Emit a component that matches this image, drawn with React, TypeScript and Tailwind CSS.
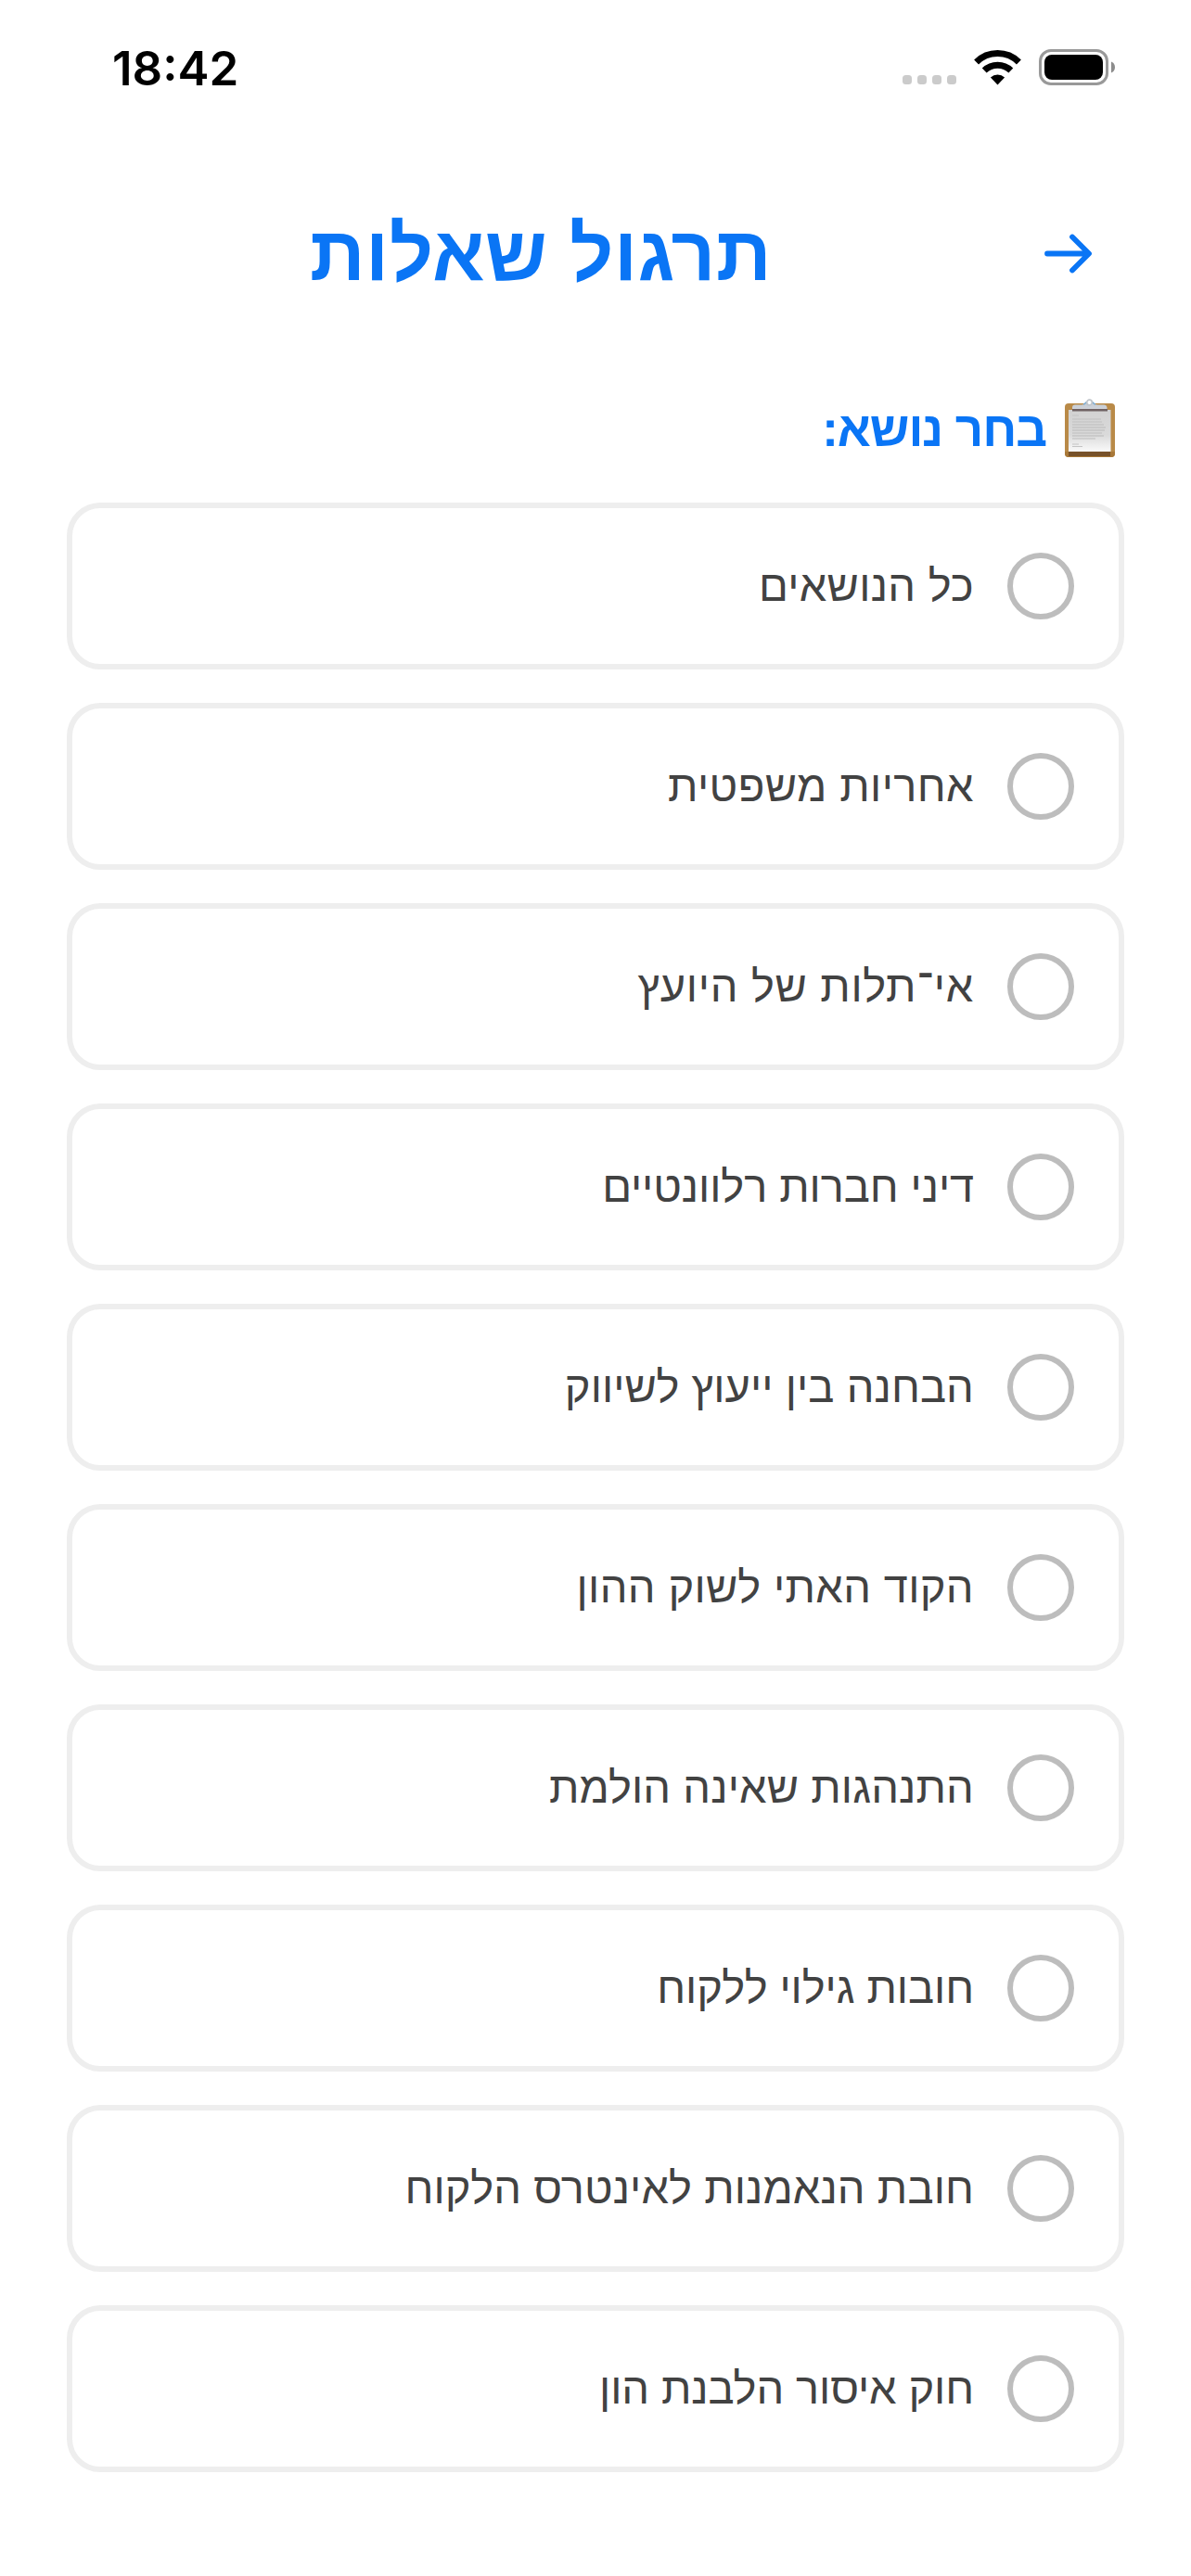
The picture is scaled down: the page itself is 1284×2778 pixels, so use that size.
const topics = [
  { label: 'כל הנושאים', tracking: 'tracking-[0.3px]' },
  { label: 'אחריות משפטית', tracking: 'tracking-[0.4px]' },
  { label: 'אי־תלות של היועץ', tracking: 'tracking-[0.7px]' },
  { label: 'דיני חברות רלוונטיים', tracking: 'tracking-[-0.08px]' },
  { label: 'הבחנה בין ייעוץ לשיווק', tracking: 'tracking-[0.08px]' },
  { label: 'הקוד האתי לשוק ההון', tracking: 'tracking-[0.36px]' },
  { label: 'התנהגות שאינה הולמת', tracking: 'tracking-[0.12px]' },
  { label: 'חובות גילוי ללקוח', tracking: 'tracking-[-0.08px]' },
  { label: 'חובת הנאמנות לאינטרס הלקוח', tracking: 'tracking-[0.1px]' },
  { label: 'חוק איסור הלבנת הון', tracking: 'tracking-[-0.1px]' },
];

function WifiIcon() {
  return (
    <svg width="51" height="38" viewBox="0 0 51 38" fill="none">
      <path d="M2.6 12.9a32.6 32.6 0 0 1 45.8 0" stroke="#000" strokeWidth="7" />
      <path d="M11.2 22a20.6 20.6 0 0 1 28.6 0" stroke="#000" strokeWidth="7" />
      <path d="M25.5 37.5 17.9 29.6a11 11 0 0 1 15.2 0Z" fill="#000" />
    </svg>
  );
}

function BatteryIcon() {
  return (
    <svg width="82" height="40" viewBox="0 0 82 40" fill="none">
      <rect x="1.5" y="1.5" width="72" height="36" rx="11.5" stroke="#999" strokeWidth="3" />
      <rect x="6" y="6" width="63" height="27" rx="8" fill="#000" />
      <path d="M78 13.5c2.6 1 4 3.2 4 6s-1.400 5-4 6Z" fill="#8c8c8c" />
    </svg>
  );
}

function ClipboardIcon() {
  const lines = [22, 25, 28, 31, 34, 37, 40, 43];
  const widths = [31, 32, 34, 36, 35, 32, 34, 25];
  return (
    <svg width="56" height="64" viewBox="0 0 56 64">
      <defs>
        <linearGradient id="paper" x1="0" y1="0" x2="0" y2="1">
          <stop offset="0" stopColor="#d2d2d2" />
          <stop offset="0.6" stopColor="#dadada" />
          <stop offset="1" stopColor="#fafafa" />
        </linearGradient>
        <linearGradient id="clip" x1="0" y1="0" x2="0" y2="1">
          <stop offset="0" stopColor="#c3ccd6" />
          <stop offset="1" stopColor="#cfd2d8" />
        </linearGradient>
      </defs>
      <rect x="1" y="5" width="54" height="58" rx="4" fill="#b98a48" />
      <path d="M1 57h54v2a4 4 0 0 1-4 4H5a4 4 0 0 1-4-4Z" fill="#a87838" />
      <rect x="5" y="57" width="45" height="5" fill="#78522a" />
      <rect x="5" y="12" width="45.500" height="45" fill="url(#paper)" />
      <rect x="9" y="11" width="38" height="2.500" fill="#6f6263" />
      <path d="M9 11V9.500Q9 6.500 12 6.500h7q3 0 4-2.500h9q1 2.500 4 2.500h7q3 0 3.500 3V11Z" fill="url(#clip)" />
      <path d="M21 6q2-.3 3-2.500M34 6q-2-.3-3-2.500" stroke="#79a9cf" strokeWidth="1.500" fill="none" />
      <circle cx="27.500" cy="4" r="2.800" fill="#fff" stroke="#bfc4ca" strokeWidth="1.700" />
      <path d="M9 18h7M9 49h7M9 51.500h11" stroke="#c4c4c4" strokeWidth="1" />
      {lines.map((y, i) => (
        <path key={y} d={`M9 ${y}h${widths[i]}`} stroke="#c4c4c4" strokeWidth="1.300" />
      ))}
    </svg>
  );
}

export default function App() {
  return (
    <div dir="rtl" className="min-h-[2778px] w-[1284px] bg-white font-['Liberation_Sans',sans-serif]">
      <div dir="ltr" className="flex h-[146px] items-center justify-between pr-[82px] pl-[121px]">
        <span className="font-['Inter',sans-serif] text-[51px] leading-none font-semibold text-black">18:42</span>
        <div className="flex items-center">
          <div className="mt-[26px] mr-[19px] flex gap-[6px]">
            {[0, 1, 2, 3].map((dot) => (
              <span key={dot} className="size-[10px] rounded-[3.5px] bg-[#cbcbcb]" />
            ))}
          </div>
          <WifiIcon />
          <span className="ml-[19px]">
            <BatteryIcon />
          </span>
        </div>
      </div>

      <header className="flex h-[256px] items-center px-[72px]">
        <button className="flex w-[118px] shrink-0 justify-start pr-[35px]" aria-label="חזרה">
          <svg width="51" height="44" viewBox="0 0 51 44" fill="none" stroke="#0a75f5" strokeWidth="5.800" strokeLinecap="round" strokeLinejoin="round">
            <path d="M3 21.500h44.500M30 3.500l18 18-18 18" />
          </svg>
        </button>
        <h1 className="flex-1 pb-[2px] text-center text-[83px] leading-none font-bold tracking-[0.5px] whitespace-nowrap text-[#0a75f5]">
          תרגול שאלות
        </h1>
      </header>

      <main className="px-[72px]">
        <h2 className="flex h-[120px] items-center gap-[19px] pr-[9px]">
          <ClipboardIcon />
          <span className="text-[53px] leading-none font-bold tracking-[-1.1px] whitespace-nowrap text-[#0a75f5]">
            בחר נושא:
          </span>
        </h2>
        <div className="mt-5 flex flex-col gap-9">
          {topics.map((topic) => (
            <button
              key={topic.label}
              className="flex h-[180px] items-center gap-[36px] rounded-[36px] border-6 border-[#eee] bg-white px-12 text-right"
            >
              <span className="size-[72px] shrink-0 rounded-full border-6 border-[#bdbdbd]" />
              <span className={`pb-px text-[47px] leading-none whitespace-nowrap text-[#424242] ${topic.tracking}`}>
                {topic.label}
              </span>
            </button>
          ))}
        </div>
      </main>
    </div>
  );
}
